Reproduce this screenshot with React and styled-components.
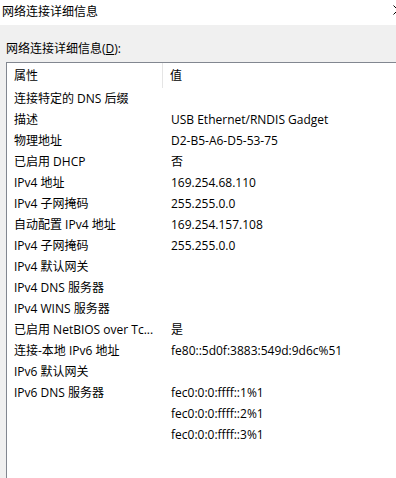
import React from "react";
import styled, { createGlobalStyle } from "styled-components";

const Global = createGlobalStyle`
  html, body { margin: 0; padding: 0; }
  body {
    width: 396px;
    height: 478px;
    overflow: hidden;
    background: #f0f0f0;
    font-family: "Open Sans", "Noto Sans CJK SC", sans-serif;
    font-size: 12px;
    color: #000;
  }
`;

const Window = styled.div`
  display: flex;
  flex-direction: column;
  width: 396px;
  height: 478px;
  overflow: hidden;
`;

const TitleBar = styled.div`
  display: flex;
  align-items: center;
  justify-content: space-between;
  height: 25px;
  background: #fff;
  padding-left: 2px;
  flex-shrink: 0;
`;

const TitleText = styled.span`
  font-size: 12px;
  line-height: 16px;
  margin-top: -2px;
`;

const CloseIcon = styled.svg`
  width: 10px;
  height: 10px;
  margin-right: -7px;
  margin-top: -6px;
`;

const Body = styled.div`
  display: flex;
  flex-direction: column;
  padding: 16px 0 0 6px;
  flex: 1;
  min-height: 0;
`;

const Label = styled.div`
  line-height: 16px;
  height: 16px;
  margin-bottom: 5px;
  u { text-decoration: underline; text-underline-offset: 1px; }
`;

const ListView = styled.div`
  flex: 1;
  margin-right: -20px;
  margin-bottom: -20px;
  background: #fff;
  border-left: 1px solid #828790;
  border-top: 1px solid #828790;
`;

const Header = styled.div`
  display: grid;
  grid-template-columns: 156px 1fr;
  height: 25px;
`;

const HeaderCell = styled.div`
  display: flex;
  align-items: center;
  padding-left: ${(p) => p.$pad}px;
  padding-bottom: 1px;
  border-right: ${(p) => (p.$sep ? "1px solid #e5e5e5" : "none")};
`;

const Row = styled.div`
  display: grid;
  grid-template-columns: 156px 1fr;
  height: 21px;
  align-items: center;
`;

const Cell = styled.div`
  padding-left: ${(p) => p.$pad}px;
  white-space: nowrap;
  overflow: hidden;
  line-height: 16px;
`;

const rows = [
  ["连接特定的 DNS 后缀", ""],
  ["描述", "USB Ethernet/RNDIS Gadget"],
  ["物理地址", "D2-B5-A6-D5-53-75"],
  ["已启用 DHCP", "否"],
  ["IPv4 地址", "169.254.68.110"],
  ["IPv4 子网掩码", "255.255.0.0"],
  ["自动配置 IPv4 地址", "169.254.157.108"],
  ["IPv4 子网掩码", "255.255.0.0"],
  ["IPv4 默认网关", ""],
  ["IPv4 DNS 服务器", ""],
  ["IPv4 WINS 服务器", ""],
  ["已启用 NetBIOS over Tc...", "是"],
  ["连接-本地 IPv6 地址", "fe80::5d0f:3883:549d:9d6c%51"],
  ["IPv6 默认网关", ""],
  ["IPv6 DNS 服务器", "fec0:0:0:ffff::1%1"],
  ["", "fec0:0:0:ffff::2%1"],
  ["", "fec0:0:0:ffff::3%1"],
];

export default function App() {
  return (
    <>
      <Global />
      <Window>
        <TitleBar>
          <TitleText>网络连接详细信息</TitleText>
          <CloseIcon viewBox="0 0 10 10">
            <path d="M0.5 0.5 L9.5 9.5 M9.5 0.5 L0.5 9.5" stroke="#000" strokeWidth="1" fill="none" />
          </CloseIcon>
        </TitleBar>
        <Body>
          <Label>
            网络连接详细信息(<u>D</u>):
          </Label>
          <ListView>
            <Header>
              <HeaderCell $pad={7} $sep>属性</HeaderCell>
              <HeaderCell $pad={7}>值</HeaderCell>
            </Header>
            {rows.map(([k, v], i) => (
              <Row key={i}>
                <Cell $pad={7}>{k}</Cell>
                <Cell $pad={8}>{v}</Cell>
              </Row>
            ))}
          </ListView>
        </Body>
      </Window>
    </>
  );
}
